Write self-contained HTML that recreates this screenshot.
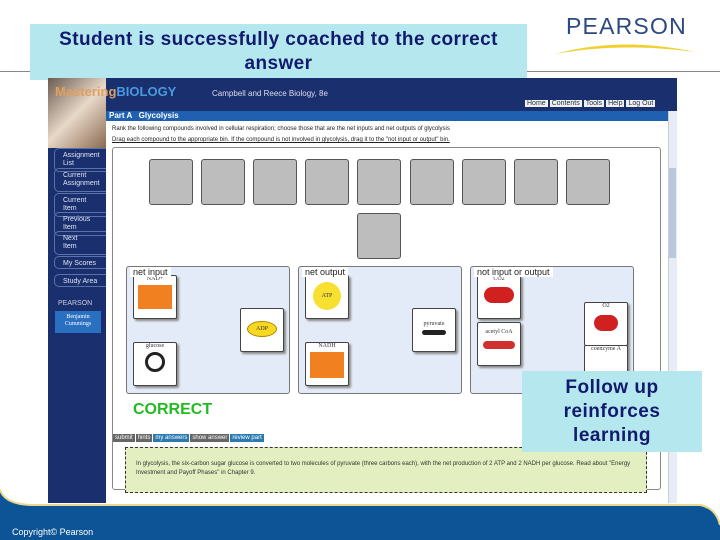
<!DOCTYPE html>
<html><head><meta charset="utf-8"><style>
*{margin:0;padding:0;box-sizing:border-box}
body{width:720px;height:540px;position:relative;overflow:hidden;background:#fff;font-family:"Liberation Sans",sans-serif}
.a{position:absolute}
.tile{position:absolute;width:44px;height:46px;background:#bdbdbd;border:1px solid #555;border-radius:3px}
.bin{position:absolute;top:266px;width:164px;height:128px;background:#e4ebf8;border:1px solid #777;border-radius:3px}
.lbl{position:absolute;top:1px;left:4px;font-size:9px;background:#fff;padding:0 3px;color:#222;z-index:3}
.card{position:absolute;width:44px;height:58px;background:#fff;border:1px solid #444;border-radius:2px;box-shadow:2px 2px 2px #888;font-size:6px;text-align:center;color:#333;font-family:"Liberation Serif",serif}
.nav{position:absolute;left:54px;width:52px;height:24px;border:1px solid #5a72a8;border-right:none;border-radius:5px 0 0 5px;color:#dfe6f5;font-size:7px;line-height:8px;padding:3px 0 0 8px}
.btn{display:inline-block;font-size:6px;color:#fff;padding:1px 2px;margin-right:1px}
</style></head><body>
<div class="a" style="left:0;top:71px;width:720px;height:1px;background:#888"></div>
<div class="a" style="left:30px;top:24px;width:497px;height:56px;background:#b4e8ee;color:#121a6e;font-weight:bold;font-size:19px;letter-spacing:0.4px;text-align:center;line-height:24px;padding-top:4px">Student is successfully coached to the correct<br>answer</div>
<div class="a" style="left:566px;top:13px;font-size:23px;letter-spacing:1.2px;color:#2b4a7f">PEARSON</div>
<svg class="a" style="left:550px;top:38px" width="150" height="20"><path d="M5 16 Q70 -2 146 14 Q70 4 5 16Z" fill="#f0d030"/></svg>

<div class="a" style="left:48px;top:78px;width:629px;height:425px;background:#1a2f6e"></div>
<div class="a" style="left:48px;top:78px;width:58px;height:70px;background:linear-gradient(135deg,#6a5a50,#e8d8c8 50%,#8a6a50)"></div>
<div class="a" style="left:55px;top:84px;font-size:13px;color:#e0a060;font-weight:bold">Mastering<span style="color:#4a9ae0">BIOLOGY</span></div>
<div class="a" style="left:212px;top:89px;font-size:8px;color:#dde">Campbell and Reece Biology, 8e</div>
<div class="a" style="left:525px;top:100px;font-size:7px;color:#234;white-space:nowrap"><span style="background:#f0f0f0;padding:0 2px;margin-right:2px">Home</span><span style="background:#f0f0f0;padding:0 2px;margin-right:2px">Contents</span><span style="background:#f0f0f0;padding:0 2px;margin-right:2px">Tools</span><span style="background:#f0f0f0;padding:0 2px;margin-right:2px">Help</span><span style="background:#f0f0f0;padding:0 2px">Log Out</span></div>
<div class="a" style="left:106px;top:111px;width:562px;height:10px;background:#2060b0;color:#fff;font-size:8px;font-weight:bold;line-height:10px;padding-left:3px">Part A &nbsp; Glycolysis</div>
<div class="a" style="left:106px;top:121px;width:562px;height:382px;background:#fff"></div>
<div class="a" style="left:668px;top:111px;width:9px;height:392px;background:#e8edf5;border-left:1px solid #ccc"></div>
<div class="a" style="left:669px;top:168px;width:7px;height:90px;background:#b8c8e0"></div>
<div class="a" style="left:112px;top:126px;font-size:6px;color:#222;white-space:nowrap">Rank the following compounds involved in cellular respiration; choose those that are the net inputs and net outputs of glycolysis</div>
<div class="a" style="left:112px;top:137px;font-size:6px;color:#222;white-space:nowrap;text-decoration:underline">Drag each compound to the appropriate bin. If the compound is not involved in glycolysis, drag it to the "not input or output" bin.</div>
<div class="a" style="left:112px;top:147px;width:549px;height:343px;border:1px solid #888;border-radius:3px"></div>
<div class="nav" style="top:148px">Assignment<br>List</div>
<div class="nav" style="top:168px">Current<br>Assignment</div>
<div class="nav" style="top:193px">Current<br>Item</div>
<div class="nav" style="top:212px">Previous<br>Item</div>
<div class="nav" style="top:231px">Next<br>Item</div>
<div class="nav" style="top:256px;height:13px">My Scores</div>
<div class="nav" style="top:274px;height:13px">Study Area</div>
<div class="a" style="left:58px;top:300px;font-size:7px;color:#ccd">PEARSON</div>
<div class="a" style="left:55px;top:311px;width:46px;height:22px;background:#2a70c0;color:#fff;font-size:6px;font-family:'Liberation Serif',serif;text-align:center;line-height:7px;padding-top:3px">Benjamin<br>Cummings</div>

<div class="tile" style="left:149px;top:159px"></div><div class="tile" style="left:201px;top:159px"></div><div class="tile" style="left:253px;top:159px"></div><div class="tile" style="left:305px;top:159px"></div><div class="tile" style="left:357px;top:159px"></div><div class="tile" style="left:410px;top:159px"></div><div class="tile" style="left:462px;top:159px"></div><div class="tile" style="left:514px;top:159px"></div><div class="tile" style="left:566px;top:159px"></div>
<div class="tile" style="left:357px;top:213px"></div>

<div class="bin" style="left:126px"></div>
<div class="bin" style="left:298px"></div>
<div class="bin" style="left:470px"></div>
<div class="card" style="left:133px;top:275px;height:44px">NAD+<div style="margin:3px auto;width:34px;height:24px;background:#f08020"></div></div>
<div class="card" style="left:133px;top:342px;height:44px">glucose<div style="margin:3px auto;width:20px;height:20px;border:3px solid #222;border-radius:50%"></div></div>
<div class="card" style="left:240px;top:308px;height:44px"><div style="margin:12px auto;width:30px;height:16px;background:#f8d820;border-radius:50%;border:1px solid #a80;font-size:6px;line-height:14px">ADP</div></div>
<div class="card" style="left:305px;top:275px;height:44px"><div style="margin:6px auto;width:28px;height:28px;background:#f8e030;border-radius:50%;font-size:6px;line-height:28px">ATP</div></div>
<div class="card" style="left:305px;top:342px;height:44px">NADH<div style="margin:3px auto;width:34px;height:26px;background:#f08020"></div></div>
<div class="card" style="left:412px;top:308px;height:44px"><div style="padding-top:12px">pyruvate</div><div style="margin:3px auto;width:24px;height:5px;background:#222;border-radius:3px"></div></div>
<div class="card" style="left:477px;top:275px;height:44px">CO2<div style="margin:5px auto;width:30px;height:16px;background:#d02020;border-radius:8px"></div></div>
<div class="card" style="left:477px;top:322px;height:44px"><div style="padding-top:6px">acetyl CoA</div><div style="margin:6px auto;width:32px;height:8px;background:#d03030;border-radius:4px"></div></div>
<div class="card" style="left:584px;top:302px;height:44px">O2<div style="margin:6px auto;width:24px;height:16px;background:#d02020;border-radius:8px"></div></div>
<div class="card" style="left:584px;top:345px;height:30px">coenzyme A</div>
<div class="a lbl" style="left:130px;top:267px">net input</div>
<div class="a lbl" style="left:302px;top:267px">net output</div>
<div class="a lbl" style="left:474px;top:267px">not input or output</div>

<div class="a" style="left:133px;top:401px;font-size:16px;font-weight:bold;color:#22bb22">CORRECT</div>
<div class="a" style="left:113px;top:426px;white-space:nowrap"><span class="btn" style="background:#666">submit</span><span class="btn" style="background:#666">hints</span><span class="btn" style="background:#2a7ab0">my answers</span><span class="btn" style="background:#666">show answer</span><span class="btn" style="background:#2a7ab0">review part</span></div>
<div class="a" style="left:125px;top:447px;width:522px;height:46px;background:#e3efc0;border:1px dashed #333;font-size:6px;color:#333;padding:12px 10px;line-height:9px">In glycolysis, the six-carbon sugar glucose is converted to two molecules of pyruvate (three carbons each), with the net production of 2 ATP and 2 NADH per glucose. Read about "Energy Investment and Payoff Phases" in Chapter 9.</div>

<div class="a" style="left:522px;top:371px;width:180px;height:81px;background:#b4e8ee;color:#121a6e;font-weight:bold;font-size:19px;letter-spacing:0.5px;text-align:center;line-height:24px;padding-top:5px">Follow up<br>reinforces<br>learning</div>

<svg class="a" style="left:0;top:480px" width="720" height="60"><path d="M0 10 Q5 24 30 25 L700 25 Q716 28 720 45 L720 60 L0 60Z" fill="#0c5496"/><path d="M0 10 Q5 24 30 25 L700 25 Q716 28 720 45" fill="none" stroke="#e8d890" stroke-width="2"/></svg>
<div class="a" style="left:12px;top:527px;font-size:9px;color:#fff">Copyright© Pearson</div>
</body></html>
